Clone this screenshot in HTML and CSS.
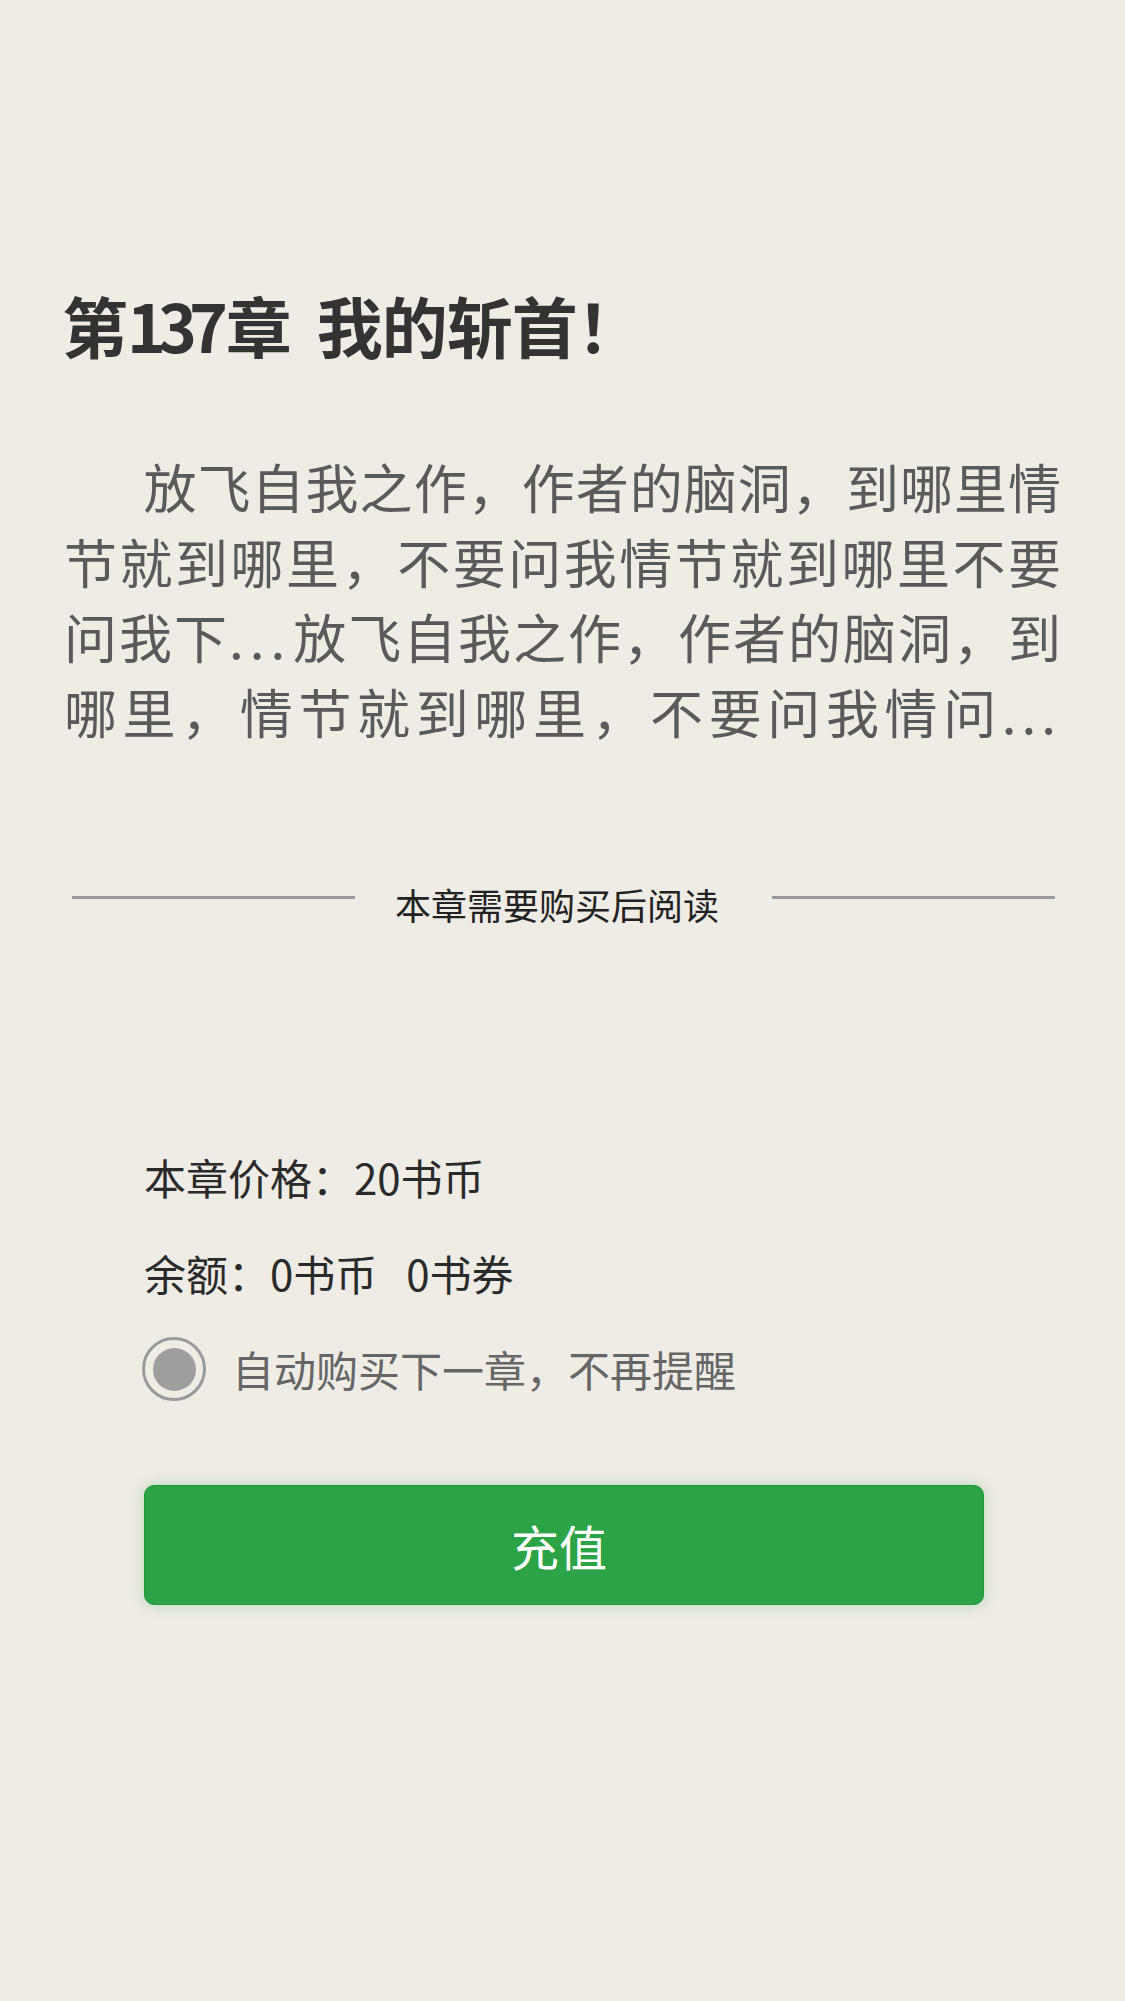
FILE: index.html
```html
<!DOCTYPE html>
<html lang="zh-CN">
<head>
<meta charset="utf-8">
<title>第137章 我的斩首！</title>
<link rel="stylesheet" href="styles.css">
</head>
<body>
<main class="page">
  <h1 class="title">第<span class="num">137</span>章<span class="sp"> </span>我的斩首！</h1>
  <p class="content">放飞自我之作，作者的脑洞，到哪里情节就到哪里，不要问我情节就到哪里不要问我下<span class="dots">...</span>放飞自我之作，作者的脑洞，到哪里，情节就到哪里，不要问我情问<span class="dots end">...</span></p>
  <div class="divider">
    <span class="divider-line"></span>
    <span class="divider-text">本章需要购买后阅读</span>
    <span class="divider-line"></span>
  </div>
  <section class="purchase">
    <div class="row">本章价格：20书币</div>
    <div class="row">余额：0书币<span class="gap">0书券</span></div>
    <div class="row radio-row">
      <span class="radio"><span class="radio-dot"></span></span>
      <span class="radio-label">自动购买下一章，不再提醒</span>
    </div>
    <button class="btn">充值</button>
  </section>
</main>
</body>
</html>
```

FILE: styles.css
```css
html, body {
  margin: 0;
  padding: 0;
  background: #efece6;
}
body {
  font-family: "Noto Sans CJK SC", "Noto Sans", sans-serif;
  min-height: 2001px;
}
.page {
  padding: 279px 64px 0;
}
.title {
  margin: 0 0 0 -2px;
  font-size: 66px;
  line-height: 90px;
  font-weight: 700;
  color: #333333;
  letter-spacing: -1px;
}
.title .num {
  letter-spacing: -8px;
  margin-right: 6px;
}
.title .sp {
  margin-right: 12px;
}
.content {
  margin: 80px 0 0;
  font-size: 53px;
  line-height: 75px;
  text-indent: 1.5em;
  text-align: justify;
  text-align-last: justify;
  color: #5a5a5a;
}
.dots {
  letter-spacing: 6px;
}
.dots.end {
  letter-spacing: 5px;
}
.divider {
  margin: 130px 6px 0 8px;
  display: flex;
  align-items: center;
}
.divider-line {
  flex: 1;
  height: 3px;
  background: #9a9a9a;
  margin-bottom: 14px;
}
.divider-text {
  margin: 0 53px 0 40px;
  font-size: 36px;
  line-height: 50px;
  color: #222222;
  white-space: nowrap;
}
.purchase {
  margin-top: 200px;
  padding: 0 77px 0 80px;
}
.row {
  font-size: 42px;
  line-height: 96px;
  height: 96px;
  color: #2a2a2a;
}
.gap {
  margin-left: 29px;
}
.radio-row {
  display: flex;
  align-items: center;
  margin-left: -2px;
}
.radio {
  width: 58px;
  height: 58px;
  border: 3px solid #9a9a9a;
  border-radius: 50%;
  display: flex;
  align-items: center;
  justify-content: center;
  flex: none;
}
.radio-dot {
  width: 43px;
  height: 43px;
  border-radius: 50%;
  background: #9e9e9e;
}
.radio-label {
  margin-left: 26px;
  color: #666666;
}
.btn {
  display: block;
  width: 100%;
  height: 120px;
  margin-top: 68px;
  border: 1px solid #22983d;
  border-radius: 10px;
  background: #2ca346;
  color: #ffffff;
  font-family: "Noto Sans CJK SC", "Noto Sans", sans-serif;
  font-size: 48px;
  box-shadow: 0 0 14px rgba(44, 163, 70, 0.3);
  padding: 0 10px 0 0;
}
```
